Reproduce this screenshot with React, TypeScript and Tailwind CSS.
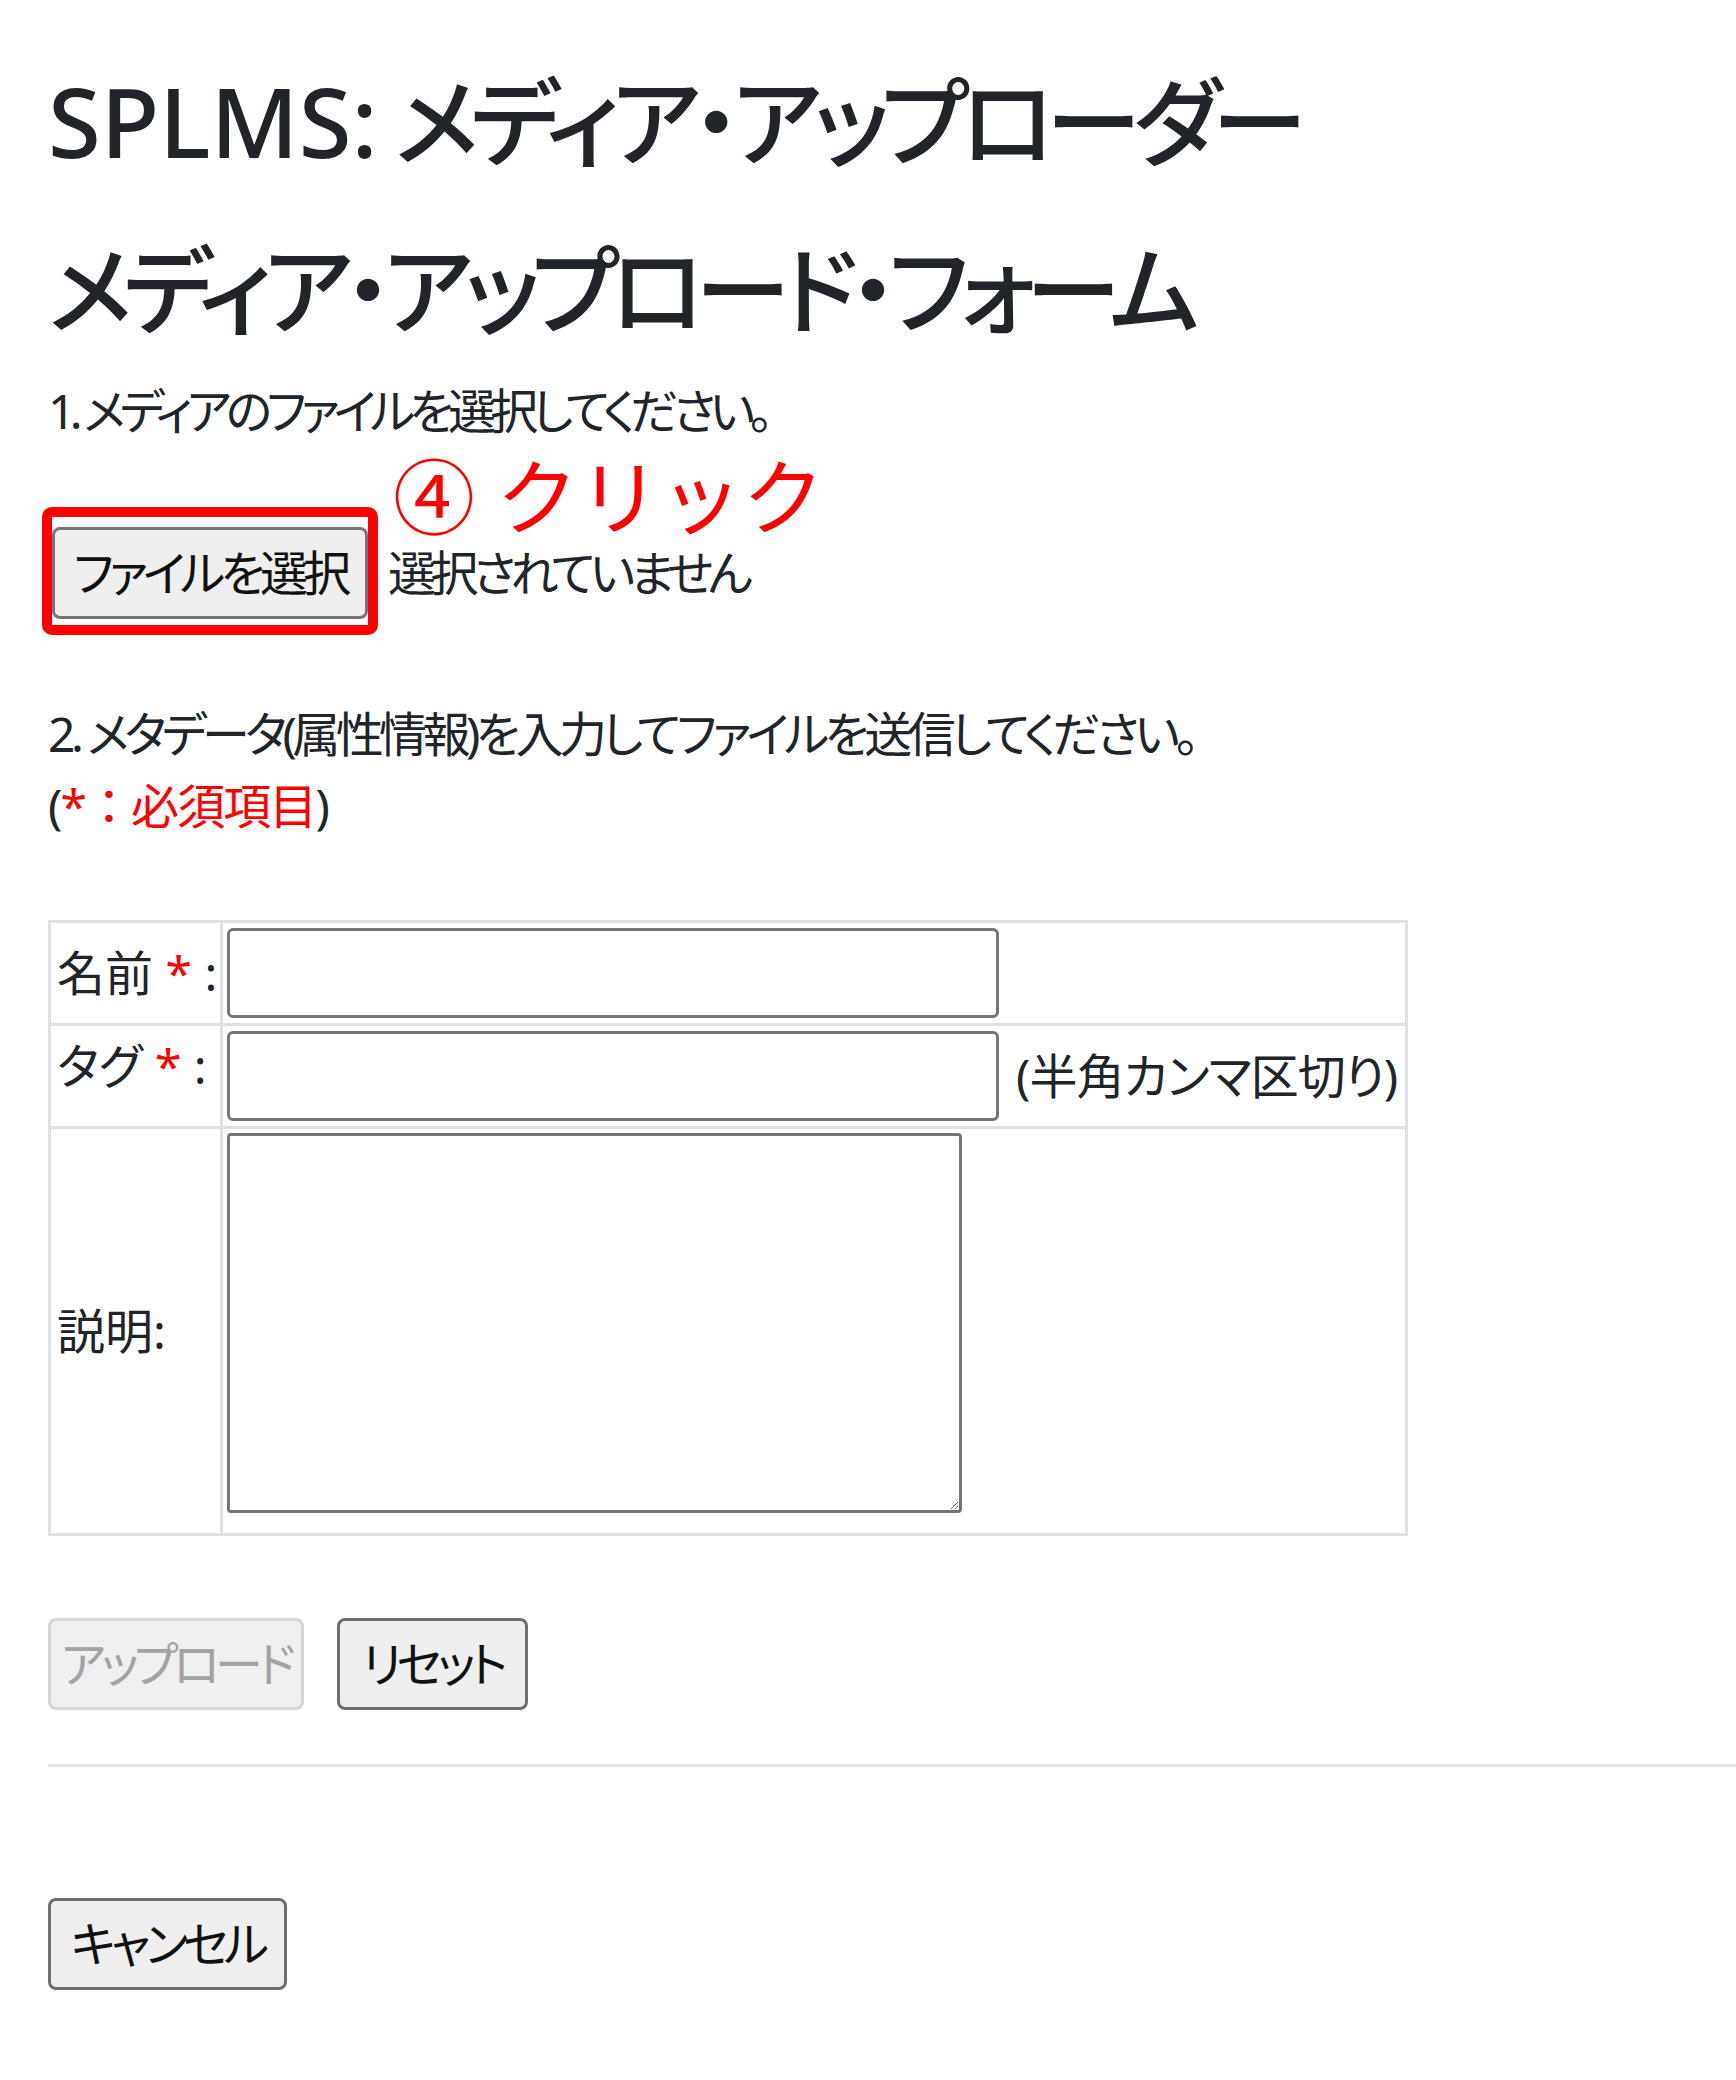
import React from "react";

// メディア・アップロード画面（SPLMS）
const jp = "font-['Noto_Sans','Noto_Sans_CJK_JP',sans-serif] [font-feature-settings:'palt']";
const btn =
  "flex shrink-0 items-center justify-center whitespace-nowrap h-[92px] rounded-[8px] border-[3px] bg-[#efefef] text-[48px] leading-none tracking-[-0.1em]";
const cell = "border-t-[3px] border-l-[3px] border-[#dee2e6]";
const field = "block shrink-0 rounded-[6px] border-[3px] border-[#767676] bg-white px-3";

function Req() {
  return <span className="text-[#ff0000]">*</span>;
}

export default function App() {
  return (
    <div className={`${jp} min-h-screen bg-white pl-[48px] pt-[63px] pb-[80px] text-[#212529]`}>
      <h1 className="text-[96px] font-medium leading-[1.2] tracking-[-0.085em]">
        <span className="tracking-normal">SPLMS:</span> メディア・アップローダー
      </h1>
      <h2 className="mt-[53px] text-[96px] font-medium leading-[1.2] tracking-[-0.09em]">
        メディア・アップロード・フォーム
      </h2>

      <p className="mt-[29px] text-[48px] leading-[72px] tracking-[-0.12em]">1. メディアのファイルを選択してください。</p>

      {/* file picker, boxed in red with its call-out */}
      <div className="relative mt-[60px] flex items-baseline">
        <span className="absolute left-[345px] top-[-43px] whitespace-nowrap text-[82px] leading-[0.8] text-[#ff0000] [font-feature-settings:normal]">
          ④ クリック
        </span>
        <div className="-ml-[6px] rounded-[10px] border-[10px] border-[#ff0000] pt-[10px] pb-[6px]">
          <button type="button" className={`${btn} w-[316px] border-[#767676] text-[#111]`}>
            ファイルを選択
          </button>
        </div>
        <span className="ml-[10px] text-[48px] leading-[60px] tracking-[-0.115em]">選択されていません</span>
      </div>

      <p className="mt-[63px] text-[48px] leading-[72px] tracking-[-0.095em]">
        2. メタデータ(属性情報)を入力してファイルを送信してください。
      </p>
      <p className="text-[48px] leading-[72px] tracking-[-0.04em] [font-feature-settings:normal]">
        (<span className="text-[#ff0000]">*：必須項目</span>)
      </p>

      <table className="mt-[78px] w-[1360px] table-fixed border-separate border-spacing-0 border-r-[3px] border-b-[3px] border-[#dee2e6] text-[48px] leading-[72px]">
        <tbody>
          <tr>
            <td className={`${cell} w-[172px] pl-[6px] align-middle`}>
              名前 <Req /> :
            </td>
            <td className={`${cell} px-[4px] py-[5px]`}>
              <input type="text" className={`${field} h-[90px] w-[772px]`} />
            </td>
          </tr>
          <tr>
            <td className={`${cell} pl-[6px] pb-[20px] align-middle`}>
              タグ <Req /> :
            </td>
            <td className={`${cell} px-[4px] py-[5px]`}>
              <div className="flex items-center gap-[17px]">
                <input type="text" className={`${field} h-[90px] w-[772px]`} />
                <span className="whitespace-nowrap tracking-[-0.02em]">(半角カンマ区切り)</span>
              </div>
            </td>
          </tr>
          <tr>
            <td className={`${cell} pl-[6px] align-middle`}>説明:</td>
            <td className={`${cell} px-[4px] pt-[4px] pb-[20px]`}>
              <textarea className="block h-[380px] w-[735px] rounded-[4px] border-[3px] border-[#767676] bg-white p-2" />
            </td>
          </tr>
        </tbody>
      </table>

      <div className="mt-[82px] flex gap-[33px]">
        <button type="button" disabled className={`${btn} w-[256px] border-[#d6d6d6] bg-[#f0f0f0] text-[#a3a3a3]`}>
          アップロード
        </button>
        <button type="reset" className={`${btn} w-[191px] border-[#6f6f6f] text-[#111]`}>
          リセット
        </button>
      </div>

      <hr className="mt-[54px] border-t-[3px] border-[#dfe2e6]" />

      <button type="button" className={`${btn} mt-[131px] w-[239px] border-[#6f6f6f] text-[#111]`}>
        キャンセル
      </button>
    </div>
  );
}
